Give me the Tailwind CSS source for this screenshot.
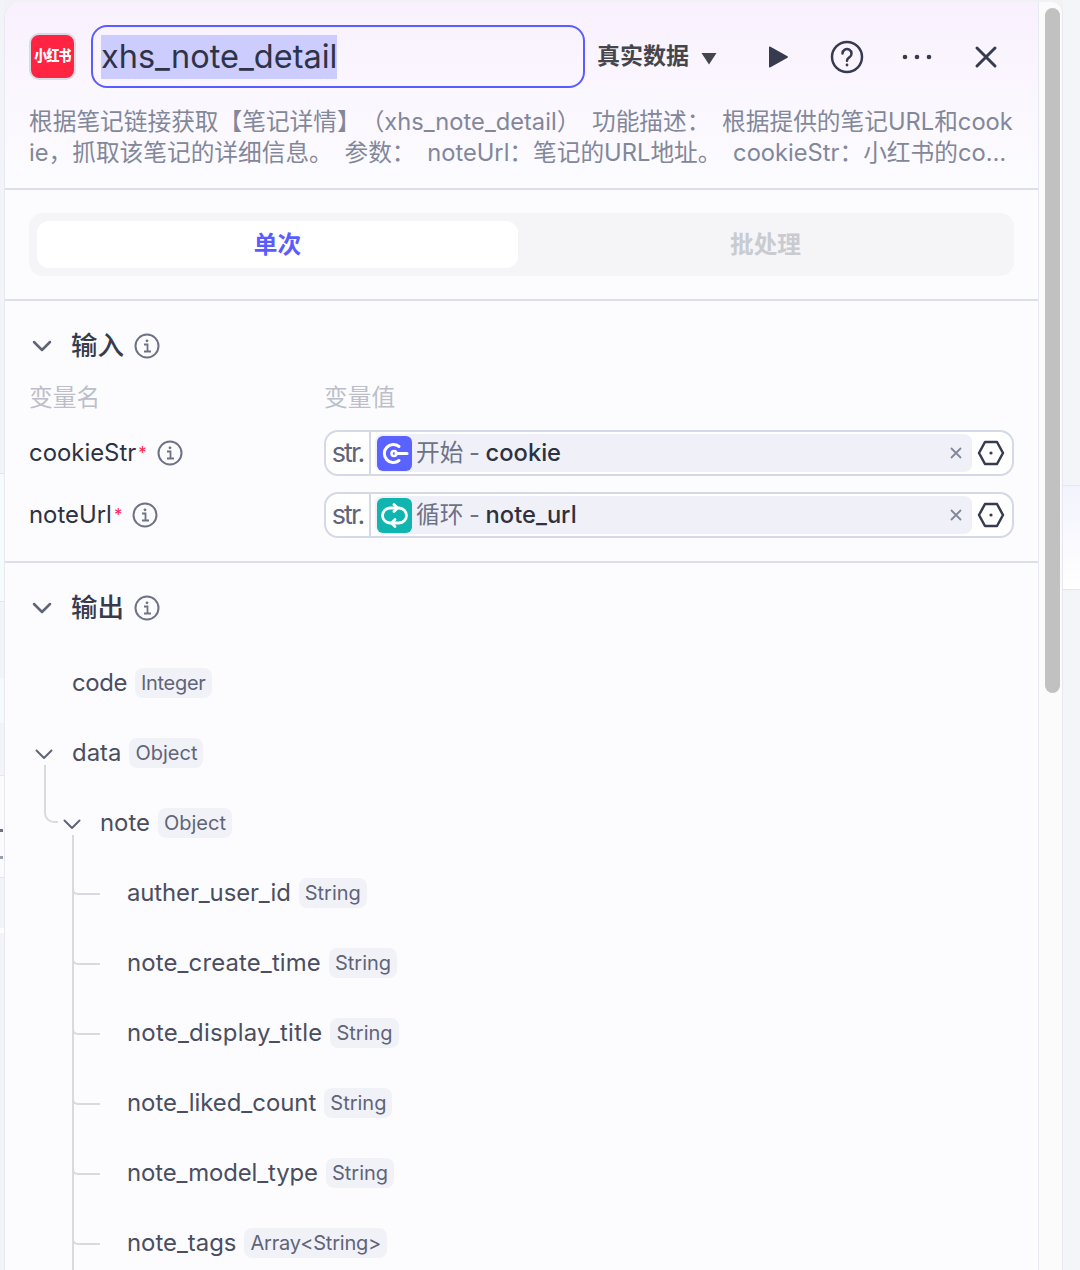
<!DOCTYPE html>
<html lang="zh">
<head>
  <meta charset="UTF-8">
  <title>xhs_note_detail</title>
  <script src="https://cdn.jsdelivr.net/npm/@tailwindcss/browser@4"></script>
</head>
<body class="h-[1270px] w-[1080px] overflow-hidden bg-white font-['Inter','Noto_Sans_CJK_SC',sans-serif]">
  <div class="flex h-[1270px] bg-[#f1f2f6]">
    <!-- sliver of the canvas on the left -->
    <div class="w-[4px] shrink-0 bg-[#f3f4f7]">
      <div class="mt-[473px] h-[129px] border-y border-[#e4e6ec] bg-[#f6fcfc]"></div>
      <div class="mt-[76px] h-[45px] bg-[#f5fbfc]"></div>
      <div class="mt-[52px] flex h-[103px] flex-col border-y border-[#e4e6ec] bg-[#fbfbff]">
        <div class="mt-[53px] h-[3px] w-[3px] bg-[#6d7286]"></div>
        <div class="mt-[24px] h-[3px] w-[3px] bg-[#9a9eae]"></div>
      </div>
      <div class="mt-[50px] h-[5px] bg-white"></div>
    </div>

    <!-- panel -->
    <div class="mt-[2px] w-[1035px] shrink-0 overflow-hidden rounded-tl-[16px] border-x border-[#e8e9f3] bg-[#fcfcff]">
      <!-- header -->
      <div class="h-[188px] border-b-2 border-[#dcdfe9] bg-gradient-to-b from-[#f9f1fe] to-[#fcfcff] px-6">
        <div class="flex h-[104px] items-start pt-[23px]">
          <div class="mt-[8px] flex h-[47px] w-[47px] shrink-0 items-center justify-center rounded-[10px] border-2 border-[#d9dbe6] bg-[#ff2442]">
            <span class="scale-y-110 text-[13px] font-black leading-none tracking-[-0.800px] text-white">小红书</span>
          </div>
          <div class="ml-[15px] flex h-[63px] w-[494px] shrink-0 items-center rounded-[16px] border-2 border-[#5a5cff] pl-[8px]">
            <span class="bg-[#ccccff] text-[32.500px] leading-[44px] text-[#2f3347]">xhs_note_detail</span>
          </div>
          <div class="ml-[12px] flex h-[63px] items-center text-[23px] font-semibold text-[#44464c]">
            <span>真实数据</span>
            <svg class="ml-[12px] mt-[4px]" width="16" height="13" viewBox="0 0 16 13"><path d="M0.500 1h15L8 12.500z" fill="#44464c"/></svg>
          </div>
          <div class="ml-[50px] flex h-[63px] items-center">
            <svg width="22" height="24" viewBox="0 0 22 24"><path d="M2 2.500v19a1 1 0 0 0 1.500.8L20.500 12.800a1 1 0 0 0 0-1.600L3.500 1.700A1 1 0 0 0 2 2.500z" fill="#373b50"/></svg>
            <svg class="ml-[41px]" width="34" height="34" viewBox="0 0 34 34" fill="none" stroke="#373b50" stroke-width="2.500"><circle cx="17" cy="17" r="15"/><path d="M12.500 13.500a4.500 4.500 0 1 1 6.800 3.900c-1.500.9-2.300 1.700-2.300 3.300" stroke-linecap="round"/><circle cx="17" cy="25" r="1.400" fill="#373b50" stroke="none"/></svg>
            <svg class="ml-[37px]" width="32" height="8" viewBox="0 0 32 8" fill="#373b50"><circle cx="4" cy="4" r="2.300"/><circle cx="16" cy="4" r="2.300"/><circle cx="28" cy="4" r="2.300"/></svg>
            <svg class="ml-[41px]" width="24" height="24" viewBox="0 0 24 24" fill="none" stroke="#373b50" stroke-width="3" stroke-linecap="round"><path d="M3 3l18 18M21 3L3 21"/></svg>
          </div>
        </div>
        <p class="w-[985px] break-all text-[23.700px] leading-[31px] text-[#82879a] [text-spacing-trim:space-all] [word-spacing:5px]">根据笔记链接获取【笔记详情】（xhs_note_detail） 功能描述： 根据提供的笔记URL和cookie，抓取该笔记的详细信息。 参数： noteUrl：笔记的URL地址。 cookieStr：小红书的co…</p>
      </div>

      <!-- tabs -->
      <div class="h-[111px] border-b-2 border-[#dcdfe9] px-6 pt-[23px]">
        <div class="flex h-[63px] items-center rounded-[14px] bg-[#f5f5f8] px-2">
          <div class="flex h-[47px] w-[481px] items-center justify-center rounded-[12px] bg-white text-[23.700px] font-semibold text-[#5a5cff]">单次</div>
          <div class="flex h-[47px] flex-1 items-center justify-center pl-[7px] text-[23.700px] font-semibold text-[#c9cbd1]">批处理</div>
        </div>
      </div>

      <!-- input -->
      <div class="h-[262px] border-b-2 border-[#dcdfe9] px-6">
        <div class="flex h-[68px] items-center pt-[22px]">
          <svg class="ml-[3px]" width="20" height="12" viewBox="0 0 20 12" fill="none" stroke="#5f6478" stroke-width="2.500" stroke-linecap="round" stroke-linejoin="round"><path d="M2 2l8 8 8-8"/></svg>
          <span class="ml-[19px] text-[26.500px] font-medium text-[#373b4d]">输入</span>
          <svg class="ml-[10px]" width="26" height="26" viewBox="0 0 26 26" fill="none" stroke="#6d7286" stroke-width="2"><circle cx="13" cy="13" r="11.500"/><path d="M10 11.500h3.500v7M10 18.500h7" stroke-width="1.800"/><circle cx="13" cy="7.800" r="1.400" fill="#6d7286" stroke="none"/></svg>
        </div>
        <div class="mt-[11px] flex h-[36px] items-center text-[23.700px] text-[#bcbfc9]">
          <span class="w-[295px]">变量名</span><span>变量值</span>
        </div>
        <div class="mt-[14px] flex h-[46px] items-center">
          <div class="flex w-[295px] items-center text-[23.900px] text-[#2e3240]">
            <span>cookieStr</span><span class="ml-[2px] self-start text-[17px] leading-[36px] text-[#ff2442]">*</span>
            <svg class="ml-[10px]" width="26" height="26" viewBox="0 0 26 26" fill="none" stroke="#6d7286" stroke-width="2"><circle cx="13" cy="13" r="11.500"/><path d="M10 11.500h3.500v7M10 18.500h7" stroke-width="1.800"/><circle cx="13" cy="7.800" r="1.400" fill="#6d7286" stroke="none"/></svg>
          </div>
          <div class="flex h-[46px] w-[690px] items-center rounded-[14px] border-2 border-[#d5d8e6] bg-white">
            <span class="flex h-full w-[45px] items-center justify-center border-r-2 border-[#d5d8e6] text-[27px] tracking-[-2px] text-[#5f6478]">str.</span>
            <div class="ml-[4px] flex h-[38px] w-[597px] items-center rounded-[8px] bg-[#f0f1f8] pl-[2px] pr-[10px]">
              <div class="flex h-[35px] w-[35px] shrink-0 items-center justify-center rounded-[6px] bg-[#5a62ff]">
                <svg width="35" height="35" viewBox="0 0 35 35" fill="none" stroke="white" stroke-width="3" stroke-linecap="round"><path d="M22 10.500a9 9 0 1 0 0 14"/><circle cx="17" cy="17.500" r="2.500" stroke-width="2.500"/><path d="M19 17.500h11"/></svg>
              </div>
              <span class="ml-[4px] text-[23.700px] text-[#6d7286] [word-spacing:-1px]">开始 - <span class="font-medium text-[#2e3240]">cookie</span></span>
              <svg class="ml-auto" width="12" height="12" viewBox="0 0 12 12" fill="none" stroke="#82879a" stroke-width="1.800"><path d="M1 1l10 10M11 1L1 11"/></svg>
            </div>
            <svg class="ml-[5px]" width="28" height="26" viewBox="0 0 28 26" fill="none" stroke="#373b50" stroke-width="2.500" stroke-linejoin="round"><path d="M8 2h12l6 11-6 11H8L2 13z"/><circle cx="14" cy="13" r="1.600" fill="#373b50" stroke="none"/></svg>
          </div>
        </div>
        <div class="mt-[16px] flex h-[46px] items-center">
          <div class="flex w-[295px] items-center text-[23.900px] text-[#2e3240]">
            <span>noteUrl</span><span class="ml-[2px] self-start text-[17px] leading-[36px] text-[#ff2442]">*</span>
            <svg class="ml-[10px]" width="26" height="26" viewBox="0 0 26 26" fill="none" stroke="#6d7286" stroke-width="2"><circle cx="13" cy="13" r="11.500"/><path d="M10 11.500h3.500v7M10 18.500h7" stroke-width="1.800"/><circle cx="13" cy="7.800" r="1.400" fill="#6d7286" stroke="none"/></svg>
          </div>
          <div class="flex h-[46px] w-[690px] items-center rounded-[14px] border-2 border-[#d5d8e6] bg-white">
            <span class="flex h-full w-[45px] items-center justify-center border-r-2 border-[#d5d8e6] text-[27px] tracking-[-2px] text-[#5f6478]">str.</span>
            <div class="ml-[4px] flex h-[38px] w-[597px] items-center rounded-[8px] bg-[#f0f1f8] pl-[2px] pr-[10px]">
              <div class="flex h-[35px] w-[35px] shrink-0 items-center justify-center rounded-[6px] bg-[#0fb5ae]">
                <svg width="35" height="35" viewBox="0 0 35 35" fill="none" stroke="white" stroke-width="2.800" stroke-linecap="round" stroke-linejoin="round"><path d="M14 25h-1a7.500 7.500 0 0 1 0-15h7"/><path d="M17 6.500l3.500 3.500-3.500 3.500"/><path d="M21 10h1a7.500 7.500 0 0 1 0 15h-7"/><path d="M18 21.500l-3.500 3.500 3.500 3.500"/></svg>
              </div>
              <span class="ml-[4px] text-[23.700px] text-[#6d7286] [word-spacing:-1px]">循环 - <span class="font-medium text-[#2e3240]">note_url</span></span>
              <svg class="ml-auto" width="12" height="12" viewBox="0 0 12 12" fill="none" stroke="#82879a" stroke-width="1.800"><path d="M1 1l10 10M11 1L1 11"/></svg>
            </div>
            <svg class="ml-[5px]" width="28" height="26" viewBox="0 0 28 26" fill="none" stroke="#373b50" stroke-width="2.500" stroke-linejoin="round"><path d="M8 2h12l6 11-6 11H8L2 13z"/><circle cx="14" cy="13" r="1.600" fill="#373b50" stroke="none"/></svg>
          </div>
        </div>
      </div>

      <!-- output -->
      <div class="px-6">
        <div class="flex h-[68px] items-center pt-[22px]">
          <svg class="ml-[3px]" width="20" height="12" viewBox="0 0 20 12" fill="none" stroke="#5f6478" stroke-width="2.500" stroke-linecap="round" stroke-linejoin="round"><path d="M2 2l8 8 8-8"/></svg>
          <span class="ml-[19px] text-[26.500px] font-medium text-[#373b4d]">输出</span>
          <svg class="ml-[10px]" width="26" height="26" viewBox="0 0 26 26" fill="none" stroke="#6d7286" stroke-width="2"><circle cx="13" cy="13" r="11.500"/><path d="M10 11.500h3.500v7M10 18.500h7" stroke-width="1.800"/><circle cx="13" cy="7.800" r="1.400" fill="#6d7286" stroke="none"/></svg>
        </div>

        <div class="mt-[17px] text-[23.900px] text-[#4a4e60]">
          <div class="flex h-[70px] items-center pl-[43px]">
            <span class="tracking-[-0.400px]">code</span><span class="ml-[8px] rounded-[8px] bg-[#f1f2f8] px-[6px] py-[2px] text-[20px] leading-[26px] tracking-[-0.300px] text-[#5f6478]">Integer</span>
          </div>
          <div class="relative flex h-[70px] items-center pl-[43px]">
            <svg class="absolute left-[6px] top-[31px]" width="18" height="11" viewBox="0 0 18 11" fill="none" stroke="#5f6478" stroke-width="2" stroke-linecap="round" stroke-linejoin="round"><path d="M1.500 1.500l7.500 7.500 7.500-7.500"/></svg>
            <span>data</span><span class="ml-[8px] rounded-[8px] bg-[#f1f2f8] px-[6px] py-[2px] text-[20px] leading-[26px] text-[#5f6478]">Object</span>
            <div class="absolute left-[15px] top-[47px] h-[58px] w-[14px] rounded-bl-[10px] border-b-2 border-l-2 border-[#d9dadf]"></div>
          </div>
          <div class="relative flex h-[70px] items-center pl-[71px]">
            <svg class="absolute left-[34px] top-[31px]" width="18" height="11" viewBox="0 0 18 11" fill="none" stroke="#5f6478" stroke-width="2" stroke-linecap="round" stroke-linejoin="round"><path d="M1.500 1.500l7.500 7.500 7.500-7.500"/></svg>
            <span>note</span><span class="ml-[8px] rounded-[8px] bg-[#f1f2f8] px-[6px] py-[2px] text-[20px] leading-[26px] text-[#5f6478]">Object</span>
            <div class="absolute bottom-[-500px] left-[43px] top-[47px] w-[2px] bg-[#d9dadf]"></div>
          </div>
          <div class="relative flex h-[70px] items-center pl-[98px]">
            <div class="absolute left-[43px] top-[27px] h-[10px] w-[28px] rounded-bl-[6px] border-b-2 border-l-2 border-[#d9dadf]"></div>
            <span class="tracking-[-0.100px]">auther_user_id</span><span class="ml-[8px] rounded-[8px] bg-[#f1f2f8] px-[6px] py-[2px] text-[20px] leading-[26px] text-[#5f6478]">String</span>
          </div>
          <div class="relative flex h-[70px] items-center pl-[98px]">
            <div class="absolute left-[43px] top-[27px] h-[10px] w-[28px] rounded-bl-[6px] border-b-2 border-l-2 border-[#d9dadf]"></div>
            <span class="tracking-[0.150px]">note_create_time</span><span class="ml-[8px] rounded-[8px] bg-[#f1f2f8] px-[6px] py-[2px] text-[20px] leading-[26px] text-[#5f6478]">String</span>
          </div>
          <div class="relative flex h-[70px] items-center pl-[98px]">
            <div class="absolute left-[43px] top-[27px] h-[10px] w-[28px] rounded-bl-[6px] border-b-2 border-l-2 border-[#d9dadf]"></div>
            <span class="tracking-[0.250px]">note_display_title</span><span class="ml-[8px] rounded-[8px] bg-[#f1f2f8] px-[6px] py-[2px] text-[20px] leading-[26px] text-[#5f6478]">String</span>
          </div>
          <div class="relative flex h-[70px] items-center pl-[98px]">
            <div class="absolute left-[43px] top-[27px] h-[10px] w-[28px] rounded-bl-[6px] border-b-2 border-l-2 border-[#d9dadf]"></div>
            <span>note_liked_count</span><span class="ml-[8px] rounded-[8px] bg-[#f1f2f8] px-[6px] py-[2px] text-[20px] leading-[26px] text-[#5f6478]">String</span>
          </div>
          <div class="relative flex h-[70px] items-center pl-[98px]">
            <div class="absolute left-[43px] top-[27px] h-[10px] w-[28px] rounded-bl-[6px] border-b-2 border-l-2 border-[#d9dadf]"></div>
            <span class="tracking-[-0.100px]">note_model_type</span><span class="ml-[8px] rounded-[8px] bg-[#f1f2f8] px-[6px] py-[2px] text-[20px] leading-[26px] text-[#5f6478]">String</span>
          </div>
          <div class="relative flex h-[70px] items-center pl-[98px]">
            <div class="absolute left-[43px] top-[27px] h-[10px] w-[28px] rounded-bl-[6px] border-b-2 border-l-2 border-[#d9dadf]"></div>
            <span>note_tags</span><span class="ml-[8px] rounded-[8px] bg-[#f1f2f8] px-[6px] py-[2px] text-[20px] leading-[26px] tracking-[-0.200px] text-[#5f6478]">Array&lt;String&gt;</span>
          </div>
        </div>
      </div>
    </div>

    <!-- scrollbar -->
    <div class="mt-[2px] w-[24px] shrink-0 rounded-tr-[10px] border-r border-[#e8e9ee] bg-[#fbfbfb] px-[6px] pt-[6px]">
      <div class="h-[685px] w-[15px] rounded-[8px] bg-[#c1c1c1]"></div>
    </div>
    <!-- sliver of the canvas on the right -->
    <div class="flex-1 bg-[#f4f5f8]">
      <div class="mt-[485px] h-[105px] border-y border-[#e6e8ee] bg-gradient-to-b from-[#f3f3fe] to-white"></div>
    </div>
  </div>
</body>
</html>
